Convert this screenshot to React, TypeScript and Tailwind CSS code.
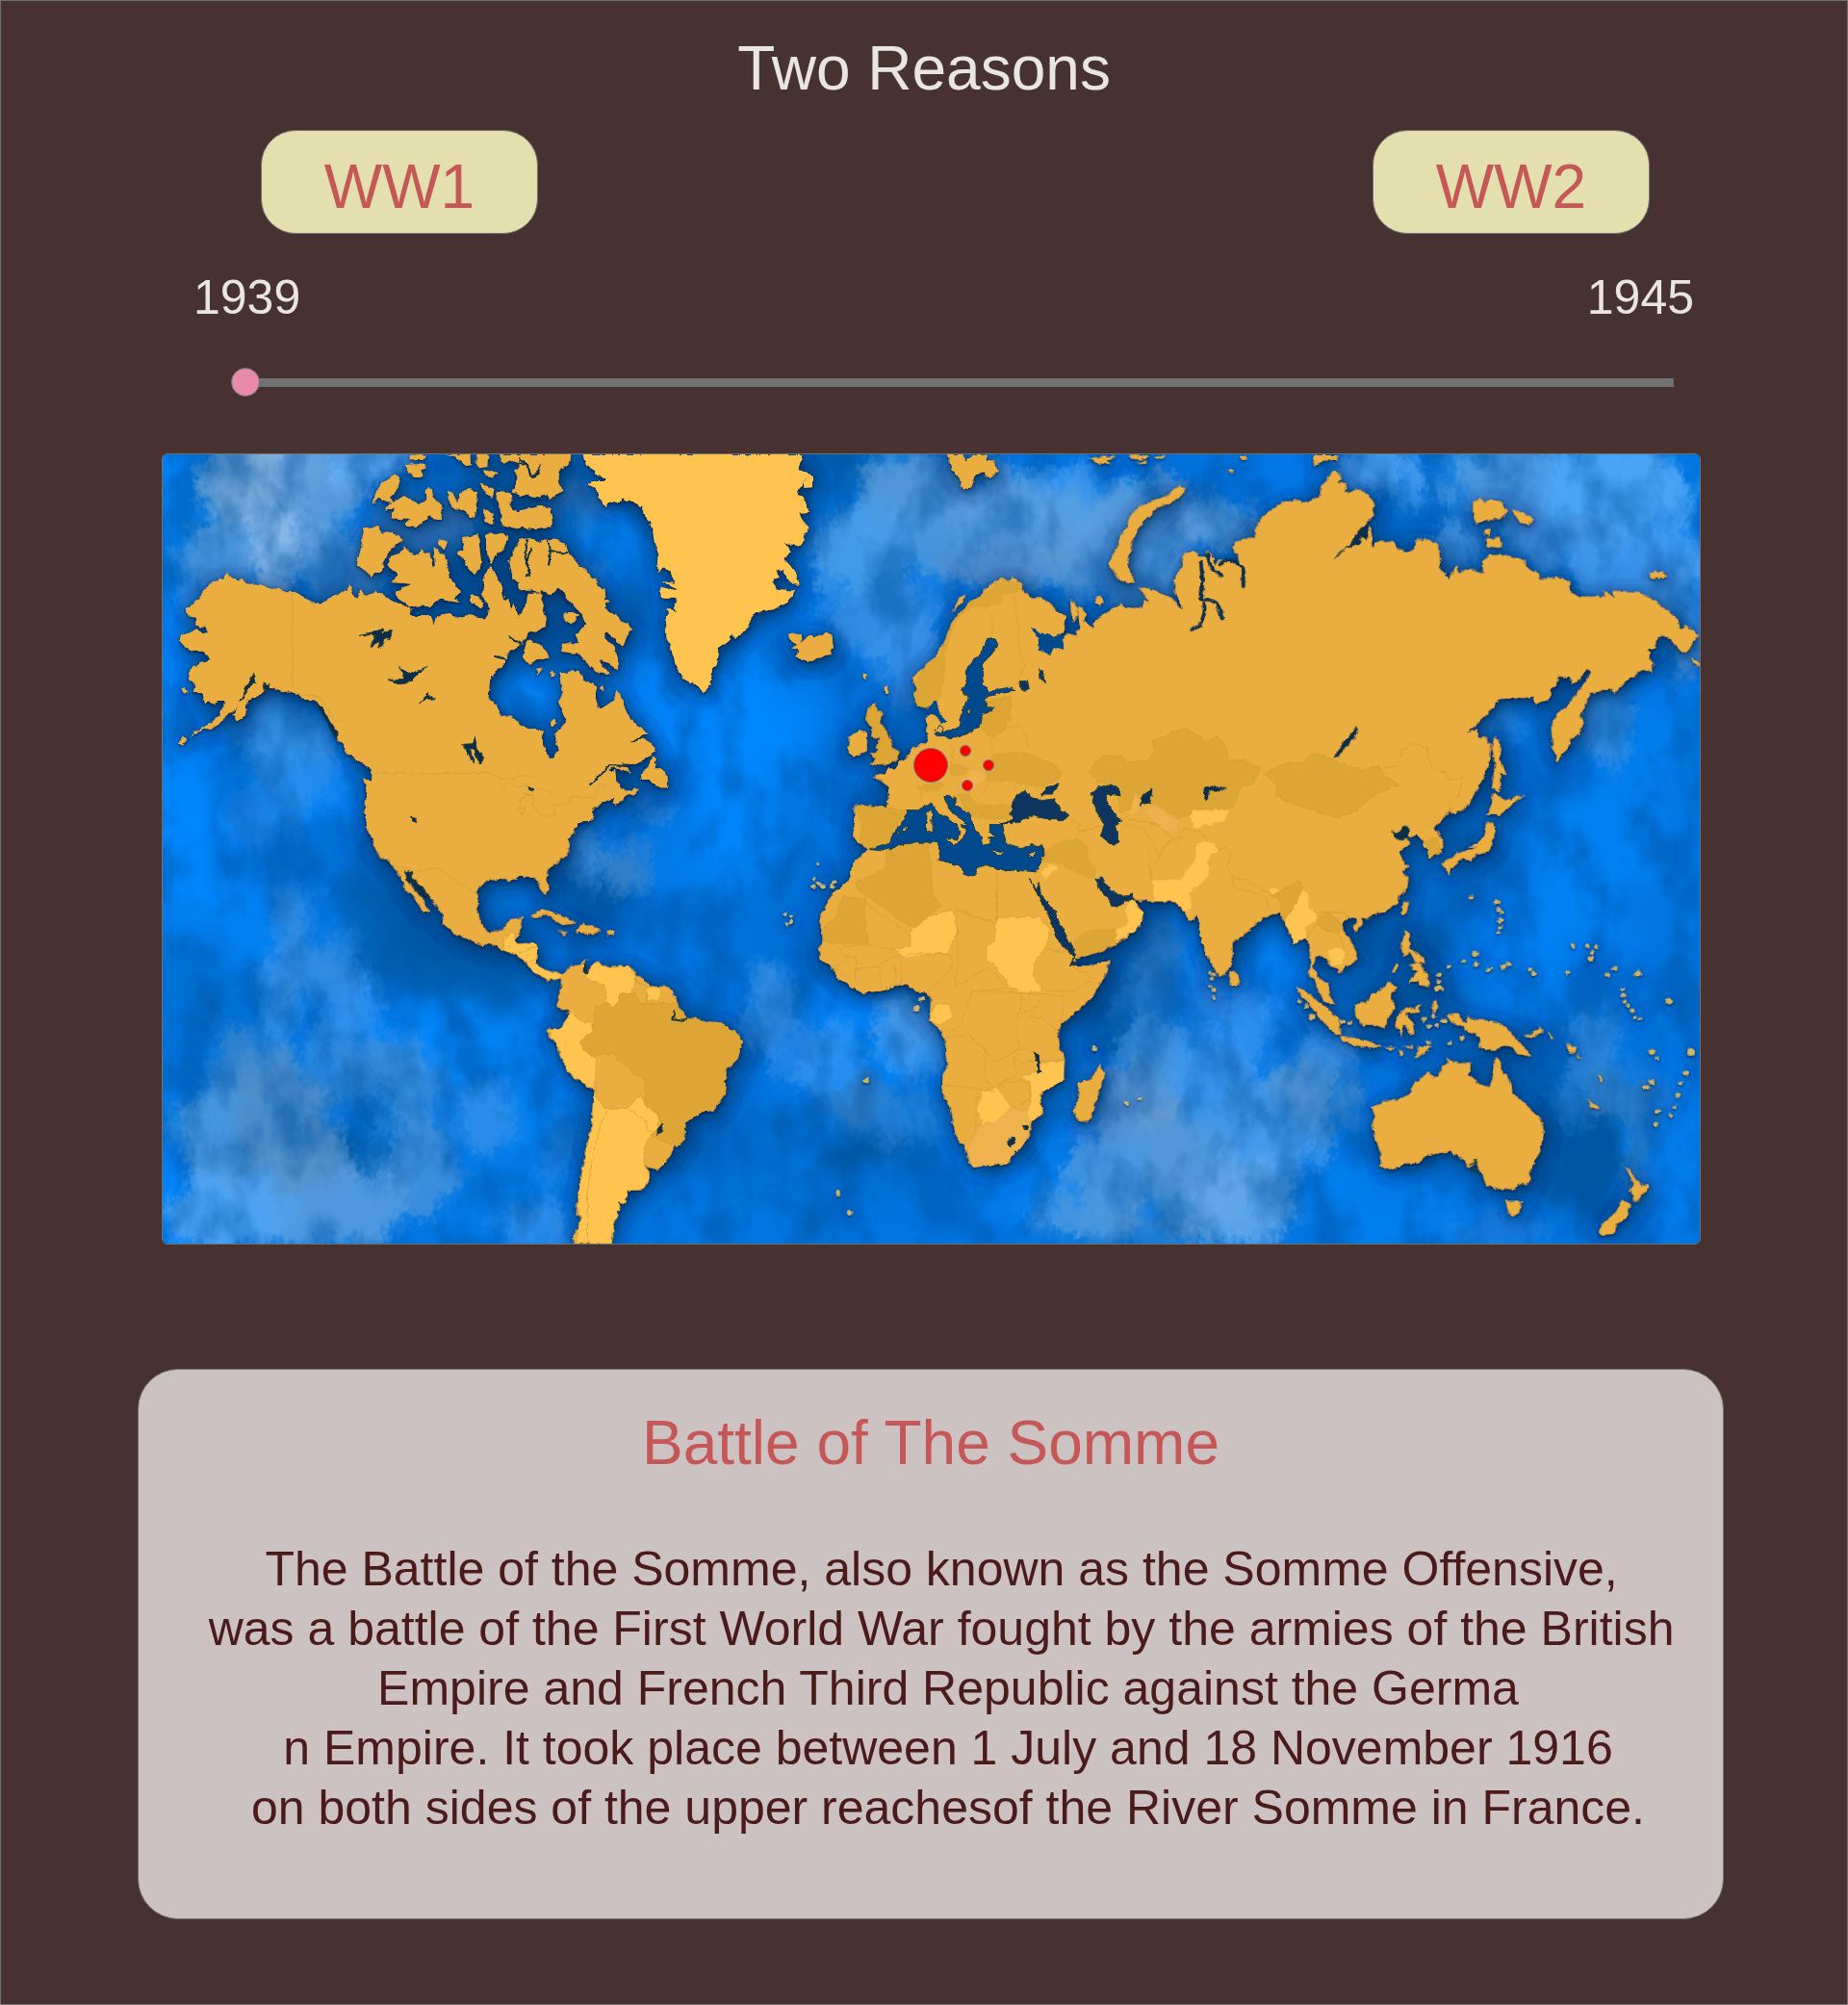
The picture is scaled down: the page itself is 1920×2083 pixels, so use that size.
import { useState } from "react";

const LAND = "#eaae41";
const LIGHT = "#ffc450";
const DARK = "#dda534";
const DEEP = "#0c2f4c";

// Each map sheet is drawn in its own units and placed on the 1600 x 822 map.
const SHEETS = {
  northWest: "translate(160 460) scale(.33333)",
  northAtlantic: "translate(540 460) scale(.33333)",
  europe: "translate(860 580) scale(.33333)",
  siberia: "translate(1120 460) scale(.42092 .33333)",
  southAmerica: "translate(160 860) scale(.42092 .33333)",
  africa: "translate(820 860) scale(.33333)",
  pacific: "translate(1200 860) scale(.38265 .33333)",
};

type Blob = [number, number, number, number, string, number];

const glow: Blob[] = [
  [180, 490, 30, 30, "#0088ff", 1], [200, 540, 26, 60, "#0060b4", 0.8], [185, 660, 22, 110, "#0088ff", 0.8],
  [225, 530, 20, 14, "#0088ff", 0.8], [190, 860, 40, 90, "#0088ff", 0.9], [215, 1040, 40, 60, "#006bcc", 0.8],
  [250, 960, 50, 50, "#0088ff", 0.6], [330, 800, 60, 60, "#0088ff", 0.7], [370, 880, 40, 50, "#006bcc", 0.6],
  [420, 960, 60, 80, "#005aa8", 0.8], [500, 1010, 50, 50, "#0057a3", 0.8], [460, 1080, 100, 40, "#0088ff", 0.8],
  [550, 1130, 50, 80, "#0080f0", 0.9], [180, 1250, 20, 50, "#0088ff", 1], [500, 1230, 60, 60, "#007ae6", 0.8],
  [545, 715, 36, 34, "#0088ff", 1], [620, 570, 40, 50, "#0088ff", 0.6], [660, 720, 50, 60, "#0088ff", 0.6],
  [760, 740, 90, 60, "#0088ff", 1], [760, 830, 50, 90, "#0088ff", 0.8], [830, 690, 60, 50, "#0080f0", 0.8],
  [650, 640, 40, 60, "#0068c4", 0.8], [860, 490, 60, 40, "#005aa8", 0.9], [880, 520, 40, 16, "#0088ff", 0.8],
  [620, 930, 60, 40, "#00539c", 0.8], [590, 980, 50, 26, "#0070d8", 0.8], [700, 930, 50, 80, "#0076e0", 0.7],
  [740, 890, 50, 40, "#0088ff", 0.5], [780, 1000, 60, 70, "#006fd6", 0.7], [700, 1120, 60, 80, "#0068c4", 0.7],
  [760, 1190, 60, 40, "#0068c4", 0.8], [900, 1080, 70, 60, "#0088ff", 0.8], [910, 1210, 60, 40, "#0055a0", 0.9],
  [860, 1250, 30, 30, "#005cab", 0.8], [960, 1250, 120, 40, "#0076e0", 0.9], [1060, 1220, 60, 50, "#0080f0", 0.8],
  [1080, 1150, 40, 50, "#0080f0", 0.7], [1150, 1060, 40, 40, "#0057a3", 0.9], [1170, 990, 50, 50, "#00539c", 0.7],
  [1220, 970, 26, 60, "#0080f0", 0.8], [1310, 1000, 34, 50, "#0088ff", 0.9], [1300, 1080, 60, 50, "#0078e4", 0.9],
  [1430, 970, 40, 40, "#007ae8", 0.8], [1460, 1020, 60, 60, "#0055a0", 0.7], [1530, 920, 60, 60, "#0068c4", 0.7],
  [1600, 980, 90, 60, "#0084f8", 0.8], [1640, 880, 90, 60, "#0084f8", 0.8], [1700, 760, 50, 80, "#0080f0", 0.8],
  [1560, 860, 40, 70, "#0068c4", 0.6], [1540, 790, 50, 40, "#0060b8", 0.7], [1640, 700, 50, 30, "#0068c8", 0.8],
  [1640, 1190, 50, 80, "#0055a0", 0.9], [1600, 1120, 40, 60, "#0060b4", 0.7], [1440, 1250, 100, 40, "#0080f0", 0.9],
  [1730, 1180, 40, 100, "#0080f0", 0.9], [1700, 1060, 60, 60, "#0076e0", 0.7], [1330, 490, 60, 30, "#007cec", 1],
  [1280, 500, 40, 30, "#006fd6", 0.8], [1460, 520, 60, 30, "#0070d8", 0.8], [1500, 560, 60, 40, "#0062bc", 0.8],
  [1560, 620, 60, 40, "#3a8fe6", 0.6], [1740, 600, 40, 60, "#2f92f4", 0.8], [540, 500, 80, 70, "#0060b0", 0.8],
  [510, 600, 40, 60, "#0058a4", 0.9], [560, 630, 60, 60, "#0058a4", 0.8], [900, 940, 90, 70, "#0070d8", 0.5],
];

const clouds: Blob[] = [
  [270, 500, 60, 70, "#8ab4dc", 0.95], [290, 560, 44, 50, "#86b8ea", 0.95], [330, 500, 46, 50, "#5f9fdc", 0.9],
  [380, 480, 40, 20, "#68b0f6", 0.9], [230, 580, 46, 34, "#4f98dc", 0.85], [240, 500, 28, 46, "#5a96cc", 0.8],
  [350, 590, 50, 40, "#4a8fd0", 0.8], [210, 640, 18, 46, "#3f90dc", 0.7], [440, 545, 50, 30, "#4180c0", 0.8],
  [290, 760, 50, 36, "#3f90dc", 0.75], [310, 800, 44, 40, "#3c94e8", 0.6], [270, 850, 40, 24, "#2f8ee8", 0.5],
  [305, 960, 18, 40, "#3e90dc", 0.75], [310, 1010, 40, 34, "#3a92e6", 0.7], [350, 1010, 26, 44, "#3a90e0", 0.6],
  [290, 1060, 12, 60, "#4a9ae6", 0.7], [370, 1080, 26, 70, "#3d97ee", 0.7], [420, 1120, 46, 40, "#3d97ee", 0.7],
  [505, 1160, 32, 40, "#3a94ea", 0.7], [340, 1090, 14, 30, "#4a9ae6", 0.6], [250, 1100, 24, 40, "#4088cc", 0.75],
  [230, 1180, 46, 60, "#4a98de", 0.95], [290, 1170, 50, 80, "#4e8ec8", 0.9], [330, 1230, 90, 60, "#5592ca", 0.95],
  [240, 1260, 66, 40, "#50a4f4", 0.9], [360, 1260, 60, 40, "#509ae2", 0.95], [430, 1210, 40, 60, "#4a94dc", 0.8],
  [400, 1120, 60, 40, "#4088cc", 0.5], [560, 1270, 40, 26, "#3d97ee", 0.7], [580, 1200, 16, 40, "#3d97ee", 0.5],
  [610, 890, 20, 36, "#4792dc", 0.8], [650, 900, 22, 28, "#3e86cc", 0.8], [570, 860, 20, 20, "#3c80c0", 0.8],
  [680, 835, 26, 14, "#3a8cdc", 0.7], [600, 520, 26, 24, "#3a7cbc", 0.7], [615, 585, 20, 16, "#2f8ae4", 0.6],
  [960, 520, 80, 50, "#5498d8", 0.95], [900, 570, 60, 50, "#4a9eea", 0.9], [1010, 560, 60, 50, "#4a96dc", 0.95],
  [1080, 530, 90, 46, "#58a0e2", 0.95], [920, 640, 60, 40, "#3d94e6", 0.8], [940, 690, 30, 46, "#3f96ec", 0.8],
  [1040, 590, 60, 30, "#4c8cca", 0.9], [1130, 580, 70, 40, "#5898d4", 0.9], [1190, 540, 70, 46, "#569fe0", 0.95],
  [1260, 550, 60, 30, "#579cdc", 0.95], [1180, 600, 50, 34, "#54a0e6", 0.95], [1120, 500, 50, 14, "#2b92f6", 0.8],
  [1430, 490, 50, 30, "#4ca0f0", 0.9], [1570, 500, 70, 40, "#529ce0", 0.9], [1680, 510, 80, 50, "#4ca6f8", 0.95],
  [1620, 560, 70, 30, "#4594e0", 0.9], [1700, 590, 70, 40, "#459cf0", 0.8], [1510, 565, 30, 20, "#4a98e4", 0.8],
  [1660, 640, 60, 16, "#4c94d8", 0.9], [1740, 640, 30, 50, "#4ca0f0", 0.8], [1660, 750, 36, 40, "#3f92e0", 0.8],
  [1560, 745, 30, 20, "#2f8ae4", 0.7], [1750, 680, 20, 14, "#4a90d0", 0.8],
  [800, 1050, 20, 50, "#3c92e4", 0.8], [830, 1090, 30, 40, "#2f8ce8", 0.6], [860, 1100, 36, 40, "#3c98f0", 0.6],
  [940, 1060, 24, 40, "#5ba4ea", 0.85], [950, 1090, 30, 30, "#469cf0", 0.8], [890, 1150, 30, 26, "#3a78b4", 0.75],
  [940, 1160, 40, 30, "#3088dc", 0.6], [1200, 990, 26, 40, "#3a7cbc", 0.7], [1190, 1040, 26, 24, "#2f7ccc", 0.6],
  [1200, 1100, 34, 40, "#4c94d8", 0.8], [1180, 1150, 50, 46, "#5c98d2", 0.9], [1215, 1180, 34, 26, "#7aa2ce", 0.8],
  [1170, 1230, 60, 60, "#4c98e0", 0.95], [1240, 1220, 60, 60, "#5298d8", 0.95], [1130, 1265, 60, 26, "#4a98e0", 0.9],
  [1290, 1250, 60, 50, "#64a8ea", 0.9], [1320, 1170, 60, 50, "#4a9cec", 0.9], [1260, 1120, 50, 40, "#469cf0", 0.8],
  [1370, 1130, 40, 46, "#4c8ecc", 0.9], [1300, 1060, 30, 40, "#3a98f0", 0.7], [1260, 1040, 30, 30, "#3088e0", 0.7],
  [1380, 1090, 30, 30, "#3a94ea", 0.7], [1200, 1275, 40, 20, "#4a86c0", 0.7], [1660, 1090, 30, 40, "#3a90e0", 0.7],
  [1690, 1140, 46, 30, "#3482c8", 0.8], [1700, 1210, 20, 50, "#3080c8", 0.7], [1640, 1140, 30, 20, "#2f88dc", 0.6],
  [1560, 1280, 60, 14, "#2a86e0", 0.6],
];

const blots: Blob[] = [
  [385, 1150, 22, 20, "#0067c2", 0.9], [380, 1190, 26, 20, "#0062b8", 0.9], [395, 1215, 14, 16, "#0062b8", 0.8],
  [300, 1180, 6, 16, "#0d6cc4", 0.8], [345, 1140, 10, 16, "#1a68b0", 0.7], [345, 925, 12, 16, "#0060b4", 0.7],
  [480, 1068, 12, 12, "#0a64b8", 0.6], [720, 928, 10, 12, "#0060b8", 0.5], [910, 610, 20, 14, "#2a86dc", 0.7],
  [800, 1240, 14, 14, "#0060b4", 0.7], [1290, 1145, 16, 14, "#2a78c4", 0.7], [1200, 1265, 14, 20, "#0a80ee", 0.8],
];

const dots: [number, number, number][] = [
  [858, 216, 5], [928, 230, 7], [932, 255, 6], [940, 265, 4], [939, 288, 7], [938, 310, 5], [932, 328, 5],
  [797, 433, 4], [838, 417, 5], [870, 393, 8], [872, 424, 5], [904, 444, 5], [915, 437, 4], [946, 432, 6],
  [960, 424, 5], [1019, 442, 5], [1028, 455, 5], [1121, 450, 4], [1134, 369, 5], [1174, 367, 5], [1198, 370, 5],
  [1187, 387, 5], [1184, 406, 6], [1227, 457, 5], [1248, 439, 6], [1312, 455, 9], [1271, 502, 4], [1271, 522, 5],
  [1274, 541, 5], [1284, 553, 4], [1295, 570, 5], [1303, 591, 4], [1319, 597, 4], [1395, 541, 7], [1455, 698, 8],
  [1349, 699, 7], [1363, 717, 4], [1442, 764, 6], [1427, 797, 6], [1333, 810, 6], [1349, 793, 6], [1419, 832, 5],
  [1365, 882, 5], [1410, 870, 4], [1400, 898, 5], [1360, 925, 6], [150, 452, 4], [160, 457, 4], [154, 470, 4],
  [150, 495, 4], [159, 505, 5], [160, 530, 5], [392, 538, 5], [410, 556, 5], [425, 590, 6], [509, 604, 6],
  [529, 608, 5], [771, 458, 5], [771, 478, 5], [768, 499, 7], [779, 505, 4], [800, 671, 5], [833, 657, 6],
  [744, 617, 5], [728, 597, 6], [765, 617, 5], [784, 601, 6], [742, 668, 6], [757, 588, 5],
];

const atlanticDots: [number, number, number][] = [
  [88, 112, 6], [78, 161, 6], [76, 182, 6], [92, 173, 6], [101, 183, 8], [139, 167, 6], [134, 181, 7], [5, 275, 6],
  [4, 292, 6], [-14, 270, 6], [-8, 300, 5], [240, 788, 8], [152, 1140, 9], [189, 1199, 9], [952, 686, 8],
  [1051, 857, 7], [1092, 843, 6], [413, 533, 8], [396, 564, 9],
];

function Blobs({ items }: { items: Blob[] }) {
  return (
    <>
      {items.map(([x, y, rx, ry, fill, opacity], i) => (
        <ellipse key={i} cx={x} cy={y} rx={rx} ry={ry} fill={fill} opacity={opacity} />
      ))}
    </>
  );
}

function Land() {
  return (
    <g fill={LAND} strokeLinejoin="round">
      <g transform={SHEETS.northWest}>
        <path d="M95 520 125 500 150 480 160 450 185 432 200 425 215 426 230 410 238 420 260 430 270 422 290 440 320 440 340 445 365 455 390 455 410 463 440 462 455 474 480 490 500 498 515 505 560 480 590 460 600 462 610 442 622 478 635 482 645 457 655 480 690 464 715 475 740 492 790 510 802 520 800 540 865 540 872 570 880 540 920 530 940 545 975 538 1000 540 1030 550 1050 520 1100 490 1115 518 1120 500 1130 515 1135 550 1150 550 1160 520 1180 470 1205 470V580L1165 590 1150 625 1110 650 1095 665 1095 690 1070 705 1050 740 1045 800 1068 820 1080 852 1110 850 1140 875 1170 895H1205V1262H690L680 1230 665 1210 662 1180 656 1150 664 1090 652 1045 678 1055 680 1020 650 998 600 968 590 940 570 925 555 885 540 850 520 820 500 802 470 800 450 785 420 775 400 777 370 765 350 765 340 780 320 790 290 800 285 850 255 868 248 845 262 825 225 850 200 880 170 892 150 895 115 915 125 900 170 880 205 850 220 808 200 805 190 812 170 805 160 815 150 780 125 780 130 755 110 740 105 715 120 700 145 688 172 680 170 660 150 650 120 650 100 640 78 615 85 600 115 590 135 580 150 598 168 595 160 572 130 570 130 550 105 535Z" />
        <path d="M75 935 95 915 105 920 85 942ZM85 770 98 762 106 775 94 785ZM655 265 700 262 712 285 740 275 775 305 735 335 720 360 715 380 708 405 690 405 678 417 660 400 632 380 645 330ZM780 325 800 345 825 350 830 335 845 345 862 342 868 388 876 385 872 325 890 345 905 350 918 400 920 422 960 465 935 482 952 498 915 492 890 484 860 510 820 508 800 514 755 480 752 462 805 440 740 435 762 410 728 385 735 355 765 345ZM885 298 915 308 905 335 890 318ZM680 190 690 160 710 125 735 115 748 98 766 105 755 150 735 170 745 190 765 175 780 165 830 190 850 180 845 155 855 138 866 150 875 180 900 190 895 240 872 238 860 228 820 264 790 260 785 250 795 240 740 235 750 208 735 205 720 212 738 190 700 170ZM795 52 805 38H850L840 50ZM780 70 840 65 848 80 835 88 838 105 812 108 795 95ZM912 36H985L987 70 972 72 950 52ZM1005 38H1042L1038 75 1020 78 1003 68ZM1030 85 1070 95 1055 108 1035 105ZM1075 36H1205V170L1150 160 1115 155 1128 130 1130 85 1160 70 1110 55 1090 65ZM915 150 930 155 945 185 960 150 985 145 1005 155 1007 200 998 235 985 235 970 210 935 208 918 180ZM1017 125 1060 145 1055 172 1035 158ZM1030 205 1055 225 1057 255 1030 245ZM1065 155 1080 150 1112 158 1115 185 1105 190 1125 212 1150 215 1200 200 1205 200V262L1165 260 1130 268 1085 255 1078 200ZM960 295 990 290 1010 285 1015 330 1020 370 1015 395 1000 408 970 380 960 355 945 345 965 335ZM1035 285 1070 282 1105 290 1090 330 1070 345 1050 375 1040 350 1035 320ZM1125 330 1150 300 1175 295 1160 340 1170 410 1205 430V470L1150 450 1118 420 1108 370ZM1045 385 1060 400 1080 440 1090 480 1105 520 1062 555 1040 500 1022 480 1030 420ZM990 470 1030 500 1020 518 985 490ZM1165 615 1205 630V665L1170 692 1155 655ZM250 860 262 825 288 818 280 850 255 868Z" />
      </g>
      <g transform={SHEETS.northAtlantic}>
        <path fill={LIGHT} d="M197 36H880L868 85 905 95 915 112 915 138 885 140 890 110 865 160 890 180 900 215 870 218 885 245 905 268 890 280 885 310 865 325 830 310 845 345 825 360 855 395 872 440 840 435 820 400 795 392 812 415 785 435 800 455 858 462 835 497 790 520 735 528 722 545 710 580 670 608 660 595 650 620 620 638 612 690 597 712 592 755 573 782 560 760 540 752 510 735 485 690 472 640 458 610 455 570 450 545 468 530 460 515 485 525 482 500 490 485 450 485 435 470 440 450 490 460 485 452 440 432 487 438 465 400 450 385 432 405 430 390 434 350 420 310 415 280 405 245 385 220 385 200 350 182 320 175 310 185 290 180 268 195 245 170 240 145 215 130 225 120 270 120 250 100 235 98 235 85 205 72Z" />
        <path d="M-4 36H160L155 65 125 85 120 120 130 150 95 178 85 160 60 165 45 150 0 168-4 165ZM-4 210 60 195 95 205 103 235 98 262 65 265 40 270 0 262-4 262ZM-4 300 30 295 60 310 90 300 125 305 140 315 150 350 160 350 185 385 200 395 240 430 245 450 262 455 265 490 278 490 265 515 300 540 325 560 348 578 335 600 320 640 300 615 270 588 262 600 280 625 300 640 308 690 302 705 255 675 250 685 285 725 240 712 220 700 180 655 160 655 130 650 132 630 145 625 185 625 175 600 205 565 190 530 165 505 140 470 120 450 95 475 55 455 0 460-4 460ZM25 470 70 475 70 510 83 545 80 570 50 590 30 585 0 620-4 620V540L20 510ZM20 625 30 612 50 635 68 635 95 670 70 675 50 670 30 690 10 665ZM140 530 165 525 185 540 160 565 140 555ZM55 705 72 700 58 722ZM125 715 150 720 165 710 185 715 200 740 240 760 235 790 245 830 270 820 295 800 305 770 318 800 325 820 335 845 365 880 402 908 385 920 415 940 422 962 390 985 360 1002 320 1000 345 1025 290 1012 250 1035 220 1070 270 1020 300 1020 305 1060 330 1085 370 1078 360 1095 330 1100 300 1130 290 1125 295 1105 265 1118 225 1140 232 1165 215 1178 185 1180 178 1200 155 1210 155 1262H-4V880L25 895 70 895 72 940 90 985 105 985 120 960 108 910 145 870 135 845 120 805 135 780ZM415 975 425 985 418 1015 440 1015 455 1025 463 1075 440 1075 425 1068 410 1050 375 1050 385 1025 400 1010ZM838 600 850 590 878 600 880 620 905 600 920 605 935 597 945 600 955 588 970 600 978 635 965 662 930 672 905 682 880 675 862 670 870 645 845 640 865 630 840 612ZM95 870 108 860 118 872 100 885ZM98 715 106 712 107 728 98 730ZM252 760 262 757 264 768 255 772ZM1072 720 1082 722 1080 738 1073 735ZM1136 765 1145 760 1150 778 1138 780Z" />
      </g>
      <g transform={SHEETS.europe}>
        <path d="M270 390 265 375 300 340 320 320 340 305 350 275 365 265 380 215 400 185 420 160 440 135 475 120 500 85 520 75 540 60 560 75 575 60 605 80 605 100 640 125 665 125 700 145 715 165 742 185 735 230 715 240 728 262 730 250 755 235 778 243 785 205 778 155 795 155 808 172 795 195 825 215 850 185 870 170 905 155 920 138 925 158 980 155 988 140 998 155 1000 130 970 95 985 88 1060 120 1105 165 1095 110 1085 95 1085 50 1105 30 1110-5H1205V1262H1195L1165 1195 1155 1110 1130 1130 1115 1100 1080 1070 980 1068 950 1062 985 1110 975 1140 920 1190 850 1225 775 1245 770 1262H0V1070L65 1010 75 960 90 940 125 905 90 885 78 865 85 820 80 775 90 768 130 775 185 775 192 740 190 715 165 690 140 685 150 675 180 670 185 655 215 655 220 635 250 620 265 590 312 570 310 540 305 495 330 478 340 490 335 455 310 465 280 460 275 440 285 430 268 420 280 405Z" />
        <path d="M65 560 95 535 122 540 122 600 80 618 65 600ZM400 155 388 165 410 125 425 115 430 125ZM880 0H935L940 40 955 75 915 72 905 45 895 45 878 30ZM835 130 845 118 857 130 848 150 837 145Z" />
        <path fill={DARK} d="M120 480 128 462 150 452 155 475 172 478 165 510 190 550 203 590 222 600 215 630 190 640 130 645 150 625 135 610 160 595 150 590 160 560 135 555 140 530 122 515Z" />
      </g>
      <g transform={SHEETS.siberia}>
        <path d="M-4 585 20 570 35 578 50 545 80 525 105 502 110 522 140 515 160 518 165 490 182 500 175 470 150 450 180 460 220 480 240 495 255 525 258 500 240 470 238 430 255 395 262 345 280 338 295 345 300 390 305 410 320 370 318 335 330 350 335 385 350 365 370 365 400 390 395 350 382 330 385 312 410 300 440 300 438 270 450 235 480 205 510 185 545 178 550 188 580 178 598 165 600 130 615 120 630 88 652 105 640 125 665 130 655 158 690 145 715 160 732 190 725 235 690 275 690 300 722 262 728 325 745 305 780 310 790 330 810 340 830 335 835 305 855 302 885 312 895 350 890 385 915 425 935 382 940 405 965 395 1000 408 1000 370 1015 350 1060 352 1100 365 1105 385 1140 415 1135 425 1190 418 1215 435 1215 465 1235 480 1300 480 1300 460 1325 485 1320 462 1385 465 1410 480 1480 550 1485 580 1500 568 1530 600 1518 620 1510 640 1500 655 1480 640 1465 610 1440 600 1430 610 1425 640 1405 645 1418 680 1418 715 1395 705 1360 735 1325 780 1310 765 1285 775 1265 780 1252 820 1240 850 1248 870 1235 910 1215 920 1210 950 1195 970 1185 995 1172 950 1168 880 1185 840 1205 825 1240 770 1255 740 1265 712 1255 705 1240 735 1220 755 1215 730 1185 728 1180 755 1165 770 1165 800 1130 812 1125 790 1100 795 1040 798 1010 845 960 905 985 895 985 918 1005 920 1020 945 1015 990 1000 1050 955 1140 930 1155 915 1148 880 1200 900 1240V1262H855L850 1210 822 1230 812 1218 815 1190 780 1222 800 1240 805 1262H-4ZM78 375 90 340 100 320 105 290 122 265 125 235 150 200 185 180 220 165 250 135 262 140 262 155 240 180 190 205 172 235 150 260 140 290 130 310 130 335 120 385 140 435 105 430 90 405ZM583 38H642L640 52 605 55 585 70ZM975 190 990 172 1005 190 1020 178 1040 185 1060 210 1045 235 1030 240 1010 240 985 250 975 220ZM1072 208 1110 225 1125 240 1110 255 1090 248ZM1008 268 1018 270 1015 292 1005 285ZM1008 300 1040 297 1046 328 1010 322ZM1412 402 1445 402 1452 418 1412 424ZM1028 915 1042 935 1040 980 1058 1035 1042 1032 1040 1088 1022 1075 1030 1000 1022 950ZM1025 1090 1055 1115 1100 1098 1070 1130 1040 1160 1010 1160 1020 1130ZM1008 1185 1025 1185 1028 1220 1012 1262H965L1000 1235ZM44 485 54 480 60 495 50 508ZM1515 670 1530 680 1534 702 1520 690ZM25 48 95 40 70 55 80 68 45 62ZM125 40 175 38 170 52 135 50ZM185 45 215 42 205 52ZM145 60 170 60 165 70ZM400 42 414 40 414 50 402 50ZM368 85 382 85 380 94 370 92ZM-20 495-5 500 0 540-12 560Z" />
      </g>
      <path d="M984 472h16l4 8 8-8h14l-2 8 8-2 5 12-10 6-6-6-8 4-4 12-8 4-4-12-8-10Z" />
      <g transform={SHEETS.southAmerica}>
        <path d="M522-4H1042L1030 20 1020 55 1022 80 1000 100 970 135 968 155 975 190 968 208 955 195 950 165 935 152 900 152 875 168 865 158 820 165 800 190 798 270 810 300 825 325 860 322 880 285 910 280 905 320 888 355 900 362 943 360 948 378 943 425 960 442 980 452 1010 455 1030 430 1050 425 1068 408 1060 440 1070 455 1090 418 1105 425 1125 437 1170 430 1185 445 1190 465 1205 468 1225 495 1260 495 1280 510 1292 545 1295 570 1315 590 1370 605 1400 608 1440 640 1453 665 1440 720 1412 755 1408 830 1380 880 1350 885 1312 920 1308 970 1285 990 1275 1020 1245 1065 1210 1055 1222 1075 1222 1095 1205 1128 1168 1130 1165 1170 1140 1162 1150 1190 1135 1215 1135 1240 1115 1255 1130 1275 1130 1296H1035L1035 1265 1055 1250 1055 1210 1042 1208 1050 1130 1065 1010 1080 940 1088 820 1045 785 1020 755 990 665 975 650 972 628 1000 630 1025 610 1025 570 992 558 1005 500 1005 470 985 465 975 478 940 450 920 425 905 400 865 385 830 360 810 365 750 335 715 300 712 265 690 230 655 180 625 135 620 150 635 185 655 210 678 262 662 258 640 210 620 195 618 175 595 125 580 100 560 95 545 60 540 30Z" />
        <path d="M932 280 945 260 975 258 1010 275 1040 298 1010 302 985 285 970 270ZM1042 325 1060 300 1085 308 1103 322 1085 330ZM1000 322 1020 325 1012 338ZM1118 320 1140 320 1135 336 1120 335Z" />
      </g>
      <g transform={SHEETS.africa}>
        <path d="M190 160 200 120 245 80 245 70 300 75 400 45 465 45 455 95 550 150 585 120 740 140 770 190 810 300 870 390 890 430 940 430 998 412 985 460 940 535 890 575 850 610 836 640 845 690 858 720 855 785 820 805 780 832 788 895 755 918 745 965 710 1005 680 1045 640 1052 610 1048 575 1058 562 1045 555 1010 515 950 500 870 475 820 475 780 495 740 485 660 465 625 438 600 442 525 430 515 390 510 370 488 330 492 280 508 230 515 200 500 150 470 140 440 98 410 90 375 105 350 100 310 93 285 120 235 140 200 185 165ZM970 735 980 770 970 810 950 870 935 915 900 918 888 880 905 840 900 795 940 785Z" />
        {atlanticDots.map(([x, y, r], i) => (
          <circle key={i} cx={x} cy={y} r={r} fill="#c8b774" />
        ))}
      </g>
      <g transform={SHEETS.pacific}>
        <path d="M-4-4H640L645 20 680 30 695 45 660 75 670 95 688 120 670 135 688 155 685 185 665 210 660 235 620 262 590 270 580 282 560 285 560 300 545 328 538 310 548 285 525 280 508 300 510 320 530 350 547 390 545 415 520 432 498 455 495 438 478 432 465 405 435 400 430 440 448 470 470 490 475 520 488 550 460 540 442 510 435 480 418 455 425 420 415 350 400 345 375 362 370 330 355 310 340 265 320 270 290 285 250 325 210 360 210 410 195 450 175 465 155 425 145 385 125 340 118 270 100 290 85 275 85 260 60 240 50 228-4 228ZM205 450 220 452 230 480 222 494 203 490ZM383 498 410 510 440 540 485 580 500 600 505 645 490 645 465 615 435 575 420 550 395 520ZM503 652 540 655 570 662 600 675 617 684 580 684 540 677 510 665ZM622 682 655 684 640 692ZM670 682 700 680 698 688ZM718 680 752 682 715 715 705 718ZM660 695 675 700 672 712ZM542 550 572 545 590 518 612 508 632 483 657 498 640 525 652 560 635 590 625 625 600 615 560 612 545 585ZM665 575 680 560 700 565 722 550 715 575 675 580 690 590 700 610 703 645 690 640 680 612 672 625 668 655 662 625 652 620 655 600ZM670 350 680 320 692 330 690 375 705 390 730 405 732 425 712 418 690 390 675 402 668 370ZM690 430 715 420 728 440 738 460 745 495 720 490 715 475 690 488 700 462 715 448ZM640 452 655 425 662 435 645 455ZM753 545 762 535 768 560 755 580ZM792 585 825 580 832 605 848 608 850 585 862 598 915 602 945 615 985 662 1022 712 985 705 960 678 940 680 925 695 900 692 878 680 885 660 870 640 840 632 835 618 805 605ZM998 648 1025 642 1045 622 1052 632 1030 652ZM1068 640 1082 660 1072 660ZM1120 675 1145 685 1140 700 1125 700ZM1148 705 1158 720 1150 718ZM1205 765 1217 790 1208 792ZM1174 845 1207 873 1185 872ZM588 870 595 868 620 850 650 850 690 832 700 800 745 760 755 778 770 775 785 740 800 730 790 720 825 735 860 732 850 770 875 795 910 810 918 770 920 730 928 715 938 735 942 765 958 770 970 830 985 840 1015 872 1025 885 1050 912 1055 950 1045 1010 1020 1060 1015 1110 985 1110 972 1130 960 1120 940 1130 900 1115 885 1070 872 1045 850 1060 840 1035 800 1008 740 1020 715 1045 680 1045 640 1068 612 1055 615 1020 600 970 588 930 598 900ZM952 1163 995 1163 988 1200 970 1212 960 1200ZM1276 1055 1290 1070 1305 1098 1320 1115 1340 1108 1335 1130 1320 1145 1310 1168 1298 1160 1300 1142 1286 1130 1302 1110ZM1270 1160 1290 1175 1278 1215 1255 1235 1245 1268 1220 1270 1205 1262 1215 1235 1250 1200ZM900-4H922L908 75 880 82 870 80 855 108 840 92 822 105 795 145 790 125 778 115 800 95 820 80 870 65 895 20ZM688 10 700-4H735L750 25 765 30 778 75 745 92 735 38ZM675 235 690 230 680 272 668 268Z" />
        {dots.map(([x, y, r], i) => (
          <circle key={i} cx={x} cy={y} r={r + 1} fill="#d0b468" />
        ))}
      </g>
    </g>
  );
}

function Countries() {
  return (
    <g fill="none" strokeLinejoin="round">
      <g transform={SHEETS.northWest} stroke="#cc9a33" strokeWidth="2">
        <path d="M432 470V765L460 785 510 790 545 825 545 850 580 870M680 1030H1040L1085 1045 1120 1045 1140 1035 1185 1045M1082 1075 1110 1055 1130 1075 1165 1065M1135 1120 1150 1095 1185 1100M1140 1115 1145 1165 1158 1130" />
      </g>
      <g transform={SHEETS.northAtlantic} stroke="#cc9a33" strokeWidth="2">
        <path d="M0 1120 20 1095 45 1100 40 1130 70 1165 110 1160 105 1130 150 1125 160 1105 235 1105 245 1065 270 1070M55 1080 90 1085 100 1110" />
      </g>
      <g transform={SHEETS.europe} fill={DARK} stroke="#cf9c33" strokeWidth="2">
        <path d="M268 420 280 405 270 390 300 340 345 310 380 215 420 160 475 120 545 65 605 85 590 105 545 110 540 140 500 150 460 145 400 190 365 290 360 380 345 440 310 465 280 460Z" />
        <path d="M95 800 80 775 130 772 185 775 240 785 230 810 200 855 185 890 125 905 98 880 108 830ZM490 445 570 430 568 500 545 540 510 560 478 530 480 490ZM520 612 580 605 640 615 700 640 730 665 720 690 670 712 620 710 565 690 500 690 490 650ZM670 945 680 915 715 890 780 870 810 900 805 930 835 965 830 1000 805 990 720 950ZM380 650 400 640 440 655 420 675 385 675ZM275 715 320 700 365 700 350 720 290 722ZM405 740 440 730 455 760 490 800 470 810 440 800ZM770 1190 830 1155 895 1160 900 1190 850 1225 775 1245ZM470 770 575 770 570 810 490 810Z" />
        <path fill={LIGHT} stroke="none" d="M668 975 690 955 715 960 710 970 690 985 675 1005ZM1010 1005 1100 1000 1150 930 1150 890 1195 885V925L1165 960 1120 1040 1135 1085 1120 1100 1080 1070 1020 1058 1025 1030ZM945 1062 985 1110 975 1140 930 1180 895 1190 900 1160 935 1140 930 1095ZM1130 800 1200 785V830L1140 835Z" />
        <path fill="#efb34e" stroke="#d6a448" d="M410 700 450 658 490 665 490 690 460 710 430 725 410 715ZM940 750 965 740 975 790 1020 770 1095 820 1090 860 1040 845 990 790 940 800Z" />
        <path fill="none" d="M470 145 510 175 515 240M580 110 590 180 600 300 615 330 590 395M385 570 390 610 380 640M505 560 515 610M550 530 600 520 625 580 605 610M320 960 330 1090M527 975V1140L395 1090M780 865 785 825 720 800M1000 905 1010 1005M915 830 985 840 1030 920 1070 880 1080 865M1010 1005 1000 950M480 740 500 700 570 690 590 725M250 800 190 795M290 760 290 730 350 725" />
      </g>
      <g transform={SHEETS.siberia} fill={DARK} stroke="#cf9c33" strokeWidth="2">
        <path d="M28 1025 45 990 75 970 110 975 115 995 170 990 190 965 180 930 210 915 265 890 320 930 345 915 365 950 375 990 410 990 450 1015 430 1065 405 1070 380 1140 310 1140 250 1172 200 1130 170 1120 140 1085 130 1140 105 1150 100 1105 70 1060 50 1062ZM460 1030 510 1000 560 995 575 965 600 970 650 1000 700 1020 745 1005 755 1035 790 1065 740 1090 690 1145 640 1168 590 1150 520 1120 490 1100 490 1070Z" />
        <path fill={LIGHT} stroke="none" d="M275 1165 290 1145 375 1145 360 1180 320 1185 290 1202ZM290 1262 310 1242 340 1250 335 1262Z" />
        <path fill="none" d="M755 1015 790 1005 800 955 830 935 860 950 875 1015 905 1025 920 1055 950 1042 940 1100 920 1120 915 1150 870 1190M0 1210 50 1200 120 1170 200 1190 245 1250M250 1230 260 1205 300 1210 320 1240" />
      </g>
      <g transform={SHEETS.southAmerica} stroke="#cf9c33" strokeWidth="2">
        <path fill={LIGHT} d="M1062 460 1090 420 1125 437 1170 430 1190 465 1180 515 1150 520 1145 550 1130 560 1118 540 1110 490 1080 475ZM972 630 1000 630 1030 575 1060 605 1085 605 1080 640 1050 665 1070 705 1092 720 1088 815 1045 785 1020 755 990 665ZM1085 820 1110 872 1170 875 1200 830 1215 870 1250 900 1240 945 1215 980 1208 1050 1222 1075 1222 1095 1205 1128 1168 1130 1165 1170 1145 1165 1150 1190 1135 1240 1130 1296H1040L1055 1210 1045 1200 1050 1130 1065 1010 1080 940ZM862 345 888 325 895 362 943 360 948 378 943 425 980 452 1010 455 1000 470 975 475 940 450 905 400 865 385ZM1212 500 1230 495 1250 500 1245 540 1220 540Z" />
        <path fill={DARK} d="M1088 560 1120 545 1130 560 1145 550 1150 520 1190 515 1200 550 1290 545 1310 590 1370 605 1400 608 1440 640 1453 665 1440 720 1412 755 1408 830 1380 880 1350 885 1312 920 1308 970 1290 995 1225 960 1255 930 1245 890 1210 860 1215 790 1190 770 1130 705 1080 712 1048 670 1085 630Z" />
        <path d="M1120 878 1100 930 1085 1010 1070 1130 1070 1296M1120 878 1170 875 1215 915 1215 945 1240 945M595 118 650 135 700 125 750 165 790 205M900 390 945 370M918 420 945 405M1185 470 1215 495 1220 550" />
      </g>
      <g transform={SHEETS.africa} stroke="#cf9c33" strokeWidth="2">
        <path fill={DARK} d="M300 75 400 45 430 45 440 100 445 200 470 245 395 308 370 305 205 185 210 170 300 125ZM165 215 240 220 235 270 245 365 105 355 110 300 145 280Z" />
        <path fill={LIGHT} d="M650 280 780 277 815 320 800 370 770 410 760 460 790 505 740 517 690 500 650 440 615 405 615 370 640 355 640 310ZM375 320 440 275 510 252 525 330 490 390 430 395 360 407 325 375 375 370ZM438 580 455 548 500 550 508 590 470 617 445 600ZM715 780 765 765 790 735 855 720 855 785 780 832 788 895 745 922 740 885 755 850 750 790ZM600 820 648 808 695 875 645 915 605 935 585 885Z" />
        <path d="M235 235 375 330M165 370 245 365 325 380M648 140V300L510 255M525 310 525 440 515 500M105 355 150 365 170 400 210 405 205 470M210 440 280 430 325 400 360 405M280 430 285 500M330 425 335 490M350 420V490M360 405 380 390 500 395 510 430 470 480 430 515M515 500 560 470 620 435 680 500 570 510 530 620 490 640M570 510 725 515 715 590 710 640 720 690 640 730 610 690 560 650 490 650M730 515 780 520 775 560 720 580M780 520 855 525 850 610M740 590 790 590 840 640M800 380 870 385 880 430 950 470 880 510 790 505M610 690 610 780 640 820 475 800M585 820 580 960 555 970M650 805 720 785 750 800 750 850 700 870M770 700 730 690 700 720 710 770 650 800M720 730 855 722M690 895 740 880M180 410 130 440M130 440 150 440 180 470" />
        <path fill="#efb34e" stroke="#d6a448" d="M585 930 645 915 690 875 740 885 750 930 745 965 680 1045 575 1058 555 1010Z" />
      </g>
      <g transform={SHEETS.pacific} stroke="#cf9c33" strokeWidth="2">
        <path fill={LIGHT} stroke="none" d="M-4 175 70 165 110 100 110 60 150 45 175 72 145 90 145 150 90 205 100 245 50 228-4 228ZM400 185 418 215 420 250 445 280 410 310 410 345 375 362 370 330 350 290 375 250ZM468 385 500 372 516 390 510 425 480 428ZM310 190 340 190 335 205 312 205Z" />
        <path fill={DARK} d="M310 210 345 195 390 165 402 190 375 250 350 290 340 265 345 230ZM445 275 475 265 505 300 500 330 460 320 440 300ZM735 38 765 30 778 75 745 92Z" />
        <path d="M145 90 190 60 208 80 195 120 215 155 250 165 310 205M215 155 210 185 300 212 312 255M445 265 515 265 525 285M500 330 515 380M440 300 415 340M0 110 40 40 80 30M200 150 215 160" />
      </g>
    </g>
  );
}

function InlandWaters() {
  return (
    <g stroke="#1c3a3c" strokeWidth="3" strokeLinejoin="round" strokeLinecap="round" fill={DEEP}>
      <g transform={SHEETS.northWest}>
        <path d="M643 598 690 588 715 575 708 597 742 583 735 614 720 605 715 628 698 640 705 618 675 634 690 602ZM730 738 775 740 778 715 762 697 802 720 850 698 815 728 790 750 760 752ZM830 810 855 780 860 792 880 797 850 800ZM963 940 990 938 1003 915 1008 950 1028 985 1018 1002 1008 985 1000 958 985 955 998 1002 985 980ZM1168 1074 1182 1078 1176 1084ZM804 1165 816 1172 818 1184 808 1178ZM500 808 522 822 548 870 575 910 570 925 550 890 525 845ZM310 720 318 745 300 758 270 808 285 765ZM340 750 360 755 345 780Z" />
        <path fill="none" strokeWidth="6" stroke={DEEP} d="M1110 607 1145 625M1062 665 1098 675M1140 60 1165 75 1180 105 1200 95M1175 330 1160 375 1172 415" />
      </g>
      <g transform={SHEETS.northAtlantic}>
        <path fill="none" stroke={DEEP} strokeWidth="6" d="M0 50Q18 60 30 95 40 110 55 98L65 70M25 300Q12 330 18 360L35 410 20 415M85 305Q102 325 90 380M92 335 145 345M120 455 150 500M352 932 395 912M220 1068Q250 1035 280 1005L340 1008" />
        <path d="M28 1073 42 1082 32 1084Z" />
      </g>
      <g transform={SHEETS.europe}>
        <g fill="#06488c">
          <path d="M128 907 195 885 205 855 240 815 245 785 285 785 320 762 345 795 400 825 410 850 405 880 365 870 395 895 420 880 430 850 415 830 438 830 380 785 362 745 375 738 400 750 395 770 440 795 455 840 480 870 485 895 505 890 500 870 525 870 505 850 505 830 545 830 552 870 560 890 610 905 635 895 670 900 672 925 650 978 625 975 530 970 490 955 465 965 455 990 430 985 400 955 345 940 350 910 340 885 300 885 240 890 170 912Z" />
          <path d="M490 270Q495 250 512 250 532 252 530 268L525 280Q505 310 485 325 478 345 485 395L505 415Q545 405 570 402L585 412 510 428 490 435 495 465 520 462 510 480 480 485Q482 515 470 528L440 545 380 562 335 550 350 540 390 535Q418 525 410 510L420 470 440 430 415 410 430 400 430 350Q440 325 475 300Z" />
          <path stroke="none" d="M338 440 348 480 370 510 355 520 332 488 300 480ZM628 212 660 230 700 242 735 240 732 285 705 275 695 300 660 288 655 250Z" />
        </g>
        <g fill="#0b3561">
          <path d="M615 722 630 740 665 755 705 750 725 780 748 800 740 815 690 815 640 803 605 815 585 825 570 795 585 745ZM720 705 700 735 665 735 680 715ZM820 735 840 715 880 705 905 715 917 740 870 735 868 760 890 790 915 822 895 830 908 885 885 892 850 865 862 830 840 790ZM985 735 1010 715 1005 760 975 768ZM628 1000 655 1035 658 1010 664 1045 700 1090 735 1160 765 1215 770 1247 740 1215 715 1190 695 1130 660 1060ZM835 1000 852 995 880 1035 920 1055 948 1043 952 1065 925 1065 920 1080 885 1085 875 1060 850 1035ZM600 380 622 380 628 408 605 412ZM657 345 670 350 676 392 665 380Z" />
        </g>
        <path fill="none" strokeWidth="8" stroke={DEEP} d="M1195 714 1180 716 1174 730 1182 748M538 826 580 820" />
        <g fill="#dcae50">
          <path d="M310 790 325 788 328 850 308 852ZM505 908 548 915 535 926ZM625 922 652 910 640 932ZM232 842 250 838 240 852ZM216 855 225 852 222 862ZM434 475 448 472 444 492ZM350 520 360 530 352 545 335 540Z" />
        </g>
      </g>
      <g transform={SHEETS.siberia} fill="none" stroke={DEEP} strokeWidth="9">
        <path d="M303 370Q310 430 304 490 335 485 346 505 350 525 357 552M312 500Q315 540 300 570L280 583M320 345Q325 400 340 400L355 414M350 380Q375 350 395 380 412 388 408 410V448" />
        <path fill={DEEP} strokeWidth="3" d="M687 885 686 910 650 965 640 980 630 978 660 930ZM366 1076 330 1072 312 1080 316 1110 325 1085ZM152 1110 165 1095 182 1077 180 1105 165 1128ZM718 252 702 265 690 285 672 315 652 338 632 360 664 325 695 312 698 290 712 300 712 275Z" />
      </g>
      <g transform={SHEETS.southAmerica}>
        <path d="M622 135 635 140 640 165 665 190 680 222 665 218 645 190 625 165ZM1243 940 1255 922 1256 945 1243 955ZM1062 422 1072 440 1070 452 1060 450Z" />
        <path fill="none" strokeWidth="6" d="M1285 570 1282 598 1305 602 1318 592" />
      </g>
      <g transform={SHEETS.africa}>
        <path d="M762 700 775 705 780 755 790 762 772 765 773 730ZM682 975 695 963 705 975 690 995 682 990ZM731 928 740 924 744 935 735 940ZM875 430 885 408 890 428Z" />
      </g>
      <g transform={SHEETS.pacific}>
        <path d="M642 12 660 20 675 0 690 0 685 30 660 40Z" />
        <path fill="none" strokeWidth="5" d="M855 1050 872 1035 862 1065 880 1075" />
      </g>
    </g>
  );
}

function WorldMap() {
  return (
    <svg viewBox="169 472 1597 820" role="img" aria-label="World map" className="block h-auto w-full">
      <defs>
        <filter id="soft" x="-10%" y="-10%" width="120%" height="120%" colorInterpolationFilters="sRGB">
          <feGaussianBlur stdDeviation="14" result="b" />
          <feTurbulence type="fractalNoise" baseFrequency=".02" numOctaves="3" seed="11" result="n" />
          <feDisplacementMap in="b" in2="n" scale="50" xChannelSelector="R" yChannelSelector="G" />
        </filter>
        <filter
          id="mottle"
          filterUnits="userSpaceOnUse"
          x="160"
          y="460"
          width="1620"
          height="850"
          colorInterpolationFilters="sRGB"
        >
          <feTurbulence type="fractalNoise" baseFrequency=".022 .014" numOctaves="4" seed="23" />
          <feColorMatrix values="0 0 0 0 0  0 0 0 0 .32  0 0 0 0 .62  3.2 0 0 0 -1.4" />
        </filter>
        <filter id="cloud" x="-10%" y="-10%" width="120%" height="120%" colorInterpolationFilters="sRGB">
          <feGaussianBlur stdDeviation="9" result="b" />
          <feTurbulence type="fractalNoise" baseFrequency=".03 .02" numOctaves="5" seed="7" result="n" />
          <feDisplacementMap in="b" in2="n" scale="50" xChannelSelector="R" yChannelSelector="G" result="d" />
          <feTurbulence type="fractalNoise" baseFrequency=".16 .12" numOctaves="2" seed="5" result="f" />
          <feDisplacementMap in="d" in2="f" scale="20" xChannelSelector="R" yChannelSelector="G" />
        </filter>
        <filter id="rough" filterUnits="userSpaceOnUse" x="100" y="400" width="1740" height="960">
          <feTurbulence type="fractalNoise" baseFrequency=".16" numOctaves="2" seed="3" result="n" />
          <feDisplacementMap in="SourceGraphic" in2="n" scale="5" xChannelSelector="R" yChannelSelector="G" />
        </filter>
        <filter id="coast" filterUnits="userSpaceOnUse" x="100" y="400" width="1740" height="960">
          <feTurbulence type="fractalNoise" baseFrequency=".16" numOctaves="2" seed="3" result="n" />
          <feDisplacementMap in="SourceGraphic" in2="n" scale="5" xChannelSelector="R" yChannelSelector="G" result="l" />
          <feDropShadow in="l" dx="0" dy="1" stdDeviation="1.3" floodColor="#10263a" floodOpacity="1" result="s" />
          <feDropShadow in="s" dx="2" dy="3" stdDeviation="7" floodColor="#002f5e" floodOpacity=".8" result="t" />
          <feDropShadow in="t" dx="2" dy="3" stdDeviation="16" floodColor="#00386e" floodOpacity=".65" />
        </filter>
      </defs>
      <rect x="160" y="460" width="1620" height="850" fill="#0076e0" />
      <g filter="url(#soft)">
        <Blobs items={glow} />
      </g>
      <g filter="url(#cloud)">
        <Blobs items={clouds} />
        <Blobs items={blots} />
      </g>
      <rect x="160" y="460" width="1620" height="850" filter="url(#mottle)" opacity=".45" />
      <g filter="url(#coast)">
        <Land />
      </g>
      <g filter="url(#rough)">
        <Countries />
        <InlandWaters />
      </g>
    </svg>
  );
}

const battles = [
  { name: "Battle of The Somme", x: 49.95, y: 39.4, size: "size-9" },
  { name: "Battle of Tannenberg", x: 52.25, y: 37.6, size: "size-3" },
  { name: "Battle of Galicia", x: 53.75, y: 39.4, size: "size-3" },
  { name: "Battle of Cer", x: 52.35, y: 41.95, size: "size-3" },
];

export default function App() {
  const [year, setYear] = useState(1939);

  return (
    <main className="border border-[#707070] bg-[#483231] pt-[34px] pb-[88px] font-['Liberation_Sans',Arial,sans-serif] text-[#e8e5e3]">
      <h1 className="text-center text-[64px] leading-[72px]">Two Reasons</h1>

      <nav aria-label="War" className="mt-7 flex justify-between pr-[205px] pl-[270px]">
        {["WW1", "WW2"].map((war) => (
          <button
            key={war}
            type="button"
            className="h-[108px] w-72 rounded-[36px] border border-[#707070] bg-[#e3dfae] pt-[10px] text-[64px] leading-[72px] text-[#c55757]"
          >
            {war}
          </button>
        ))}
      </nav>

      <div className="mt-[38px] flex justify-between pr-[159px] pl-[200px] text-[50px] leading-[56px]">
        <span>1939</span>
        <span>1945</span>
      </div>

      <div className="mt-[45px] pr-[180px] pl-[239px]">
        <input
          type="range"
          aria-label="Year"
          min={1939}
          max={1945}
          value={year}
          onChange={(e) => setYear(Number(e.target.value))}
          className="block h-[30px] w-full cursor-pointer appearance-none bg-transparent bg-[linear-gradient(#707070,#707070)] bg-[length:calc(100%-15px)_9px] bg-[position:right_center] bg-no-repeat [&::-webkit-slider-thumb]:size-[30px] [&::-webkit-slider-thumb]:appearance-none [&::-webkit-slider-thumb]:rounded-full [&::-webkit-slider-thumb]:border [&::-webkit-slider-thumb]:border-solid [&::-webkit-slider-thumb]:border-[#707070] [&::-webkit-slider-thumb]:bg-[#e88aab]"
        />
      </div>

      <section className="relative mt-[59px] mr-[152px] ml-[167px] overflow-hidden rounded-md border border-[#707070]">
        <WorldMap />
        {battles.map((b) => (
          <button
            key={b.name}
            type="button"
            aria-label={b.name}
            style={{ left: `${b.x}%`, top: `${b.y}%` }}
            className={`absolute -translate-x-1/2 -translate-y-1/2 rounded-full border border-[#70708a] bg-[#ff0000] ${b.size}`}
          />
        ))}
      </section>

      <article className="mt-[129px] mr-[128px] ml-[142px] rounded-[42px] border border-[#707070] bg-[#ccc2c1] pt-10 pb-[84px] text-center">
        <h2 className="text-[64px] leading-[72px] text-[#c55757]">Battle of The Somme</h2>
        <p className="mt-16 pl-9 text-[50px] leading-[62px] whitespace-pre text-[#4b1b1c]">
          {"The Battle of the Somme, also known as the Somme Offensive,\u00a0\n" +
            "was a battle of the First World War fought by the armies of the British\u00a0\n" +
            "Empire and French Third Republic against the Germa\n" +
            "n Empire. It took place between 1 July and 18 November 1916\n" +
            "on both sides of the upper reachesof the River Somme in France."}
        </p>
      </article>
    </main>
  );
}
